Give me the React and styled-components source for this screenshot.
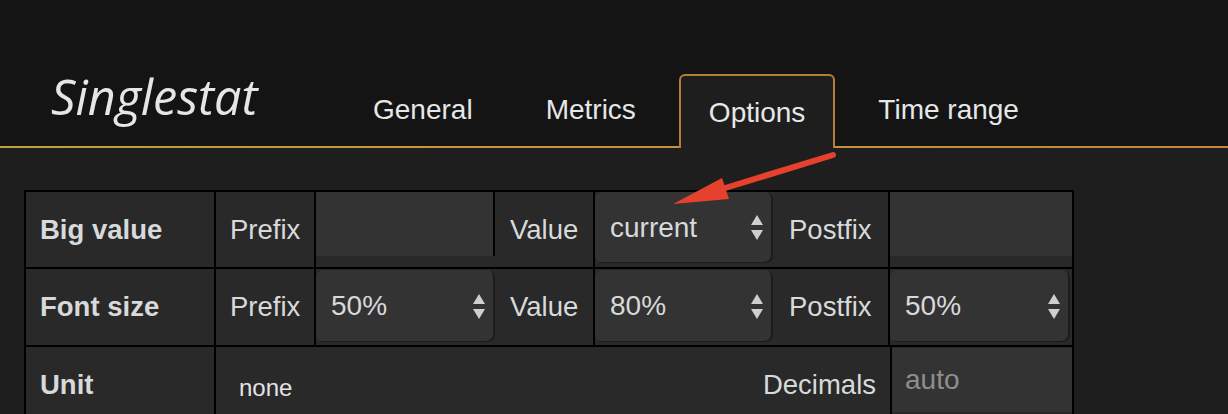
import React from 'react';
import styled, { createGlobalStyle } from 'styled-components';

const GlobalStyle = createGlobalStyle`
  html, body {
    margin: 0;
    padding: 0;
    background: #1f1e1f;
  }

  body {
    font-family: "Liberation Sans", Arial, sans-serif;
    width: 1228px;
    height: 414px;
    overflow: hidden;
  }
`;

const StyledPage = styled.div`
  position: relative;
  width: 1228px;
  height: 414px;
  overflow: hidden;
  background: #1f1e1f;
`;

const StyledHeader = styled.header`
  display: flex;
  align-items: flex-end;
  box-sizing: border-box;
  height: 148px;
  padding-left: 51px;
  background:
    linear-gradient(to right, #c2a03b, #c8863b) left bottom / 100% 2px no-repeat,
    #141414;
`;

const StyledTitle = styled.h1`
  flex: none;
  width: 292px;
  margin: 0 0 28px 0;
  font-family: "Open Sans", "DejaVu Sans", sans-serif;
  font-style: italic;
  font-weight: 400;
  font-size: 48.5px;
  line-height: 48.5px;
  color: #e6e6e6;
`;

const StyledTabs = styled.nav`
  display: flex;
  align-items: flex-end;
  gap: 13px;
`;

const StyledTab = styled.div`
  box-sizing: border-box;
  display: flex;
  align-items: center;
  height: 74px;
  padding: ${props => (props.$active ? '2px 28px 0' : '0 28px 4px')};
  border: 2px solid ${props => (props.$active ? '#b67d3a' : 'transparent')};
  border-bottom: 0;
  border-radius: 6px 6px 0 0;
  background: ${props => (props.$active ? '#1f1e1f' : 'transparent')};
  font-size: 28px;
  color: #e6e7e8;
  white-space: nowrap;
`;

const StyledBody = styled.main`
  padding: 42px 0 0 24px;
`;

const StyledTable = styled.div`
  box-sizing: border-box;
  display: flex;
  flex-direction: column;
  gap: 2px;
  width: 1050px;
  padding: 2px 2px 0 2px;
  background: #000;
`;

const StyledRow = styled.div`
  display: flex;
  height: ${props => props.$h}px;
  background: #292929;
`;

const StyledLabel = styled.div`
  box-sizing: border-box;
  flex: ${props => (props.$grow ? '1 1 auto' : 'none')};
  width: ${props => (props.$w ? `${props.$w}px` : 'auto')};
  display: flex;
  align-items: center;
  justify-content: space-between;
  padding: 0 14px 0 ${props => props.$pl || 14}px;
  border-left: ${props => (props.$sep ? '2px solid #000' : '0')};
  font-size: 27.5px;
  font-weight: ${props => (props.$bold ? 700 : 400)};
  color: #d8d9da;
  white-space: nowrap;
`;

const StyledUnit = styled.span`
  font-size: 24px;
  color: #e4e4e4;
  padding-top: 6px;
`;

const StyledField = styled.div`
  box-sizing: border-box;
  flex: none;
  display: flex;
  align-items: flex-start;
  width: ${props => props.$w}px;
  border-left: 2px solid #000;
`;

const StyledInput = styled.input`
  box-sizing: border-box;
  width: 100%;
  height: 64px;
  margin: ${props => props.$top || 0}px 0 0;
  padding: 0 13px;
  border: 0;
  border-right: ${props => (props.$edge ? '2px solid #000' : '0')};
  outline: none;
  background: #333;
  font-family: "Liberation Sans", Arial, sans-serif;
  font-size: 28px;
  color: #d8d9da;

  &::placeholder {
    color: #8e8e8e;
  }
`;

const StyledSelect = styled.div`
  box-sizing: border-box;
  flex: none;
  align-self: stretch;
  display: flex;
  align-items: center;
  justify-content: space-between;
  width: ${props => props.$w}px;
  margin: ${props => props.$mt}px 0 ${props => props.$mb}px;
  padding: 0 10px 0 15px;
  border-radius: 7px;
  background: #333;
  box-shadow: inset -2px -1px 0 #1c1c1c;
  font-size: 28px;
  color: #d8d9da;
`;

const StyledAnnotation = styled.svg`
  position: absolute;
  left: 0;
  top: 0;
  pointer-events: none;
`;

const SelectArrows = () => (
  <svg width="12" height="25" viewBox="0 0 12 25">
    <polygon points="6,0 12,10 0,10" fill="#cfcfcf" />
    <polygon points="0,15 12,15 6,25" fill="#cfcfcf" />
  </svg>
);

const Select = ({ value, w, mt = 1, mb = 3 }) => (
  <StyledSelect $w={w} $mt={mt} $mb={mb}>
    <span>{value}</span>
    <SelectArrows />
  </StyledSelect>
);

const tabs = ['General', 'Metrics', 'Options', 'Time range'];

const App = () => (
  <StyledPage>
    <GlobalStyle />
    <StyledHeader>
      <StyledTitle>Singlestat</StyledTitle>
      <StyledTabs>
        {tabs.map(tab => (
          <StyledTab key={tab} $active={tab === 'Options'}>{tab}</StyledTab>
        ))}
      </StyledTabs>
    </StyledHeader>

    <StyledBody>
      <StyledTable>
        <StyledRow $h={75}>
          <StyledLabel $w={188} $bold>Big value</StyledLabel>
          <StyledLabel $w={100} $sep>Prefix</StyledLabel>
          <StyledField $w={181}>
            <StyledInput $edge />
          </StyledField>
          <StyledLabel $w={98} $pl={15}>Value</StyledLabel>
          <StyledField $w={180}>
            <Select value="current" w={178} mt={0} mb={4} />
          </StyledField>
          <StyledLabel $w={115} $pl={16}>Postfix</StyledLabel>
          <StyledField $w={184}>
            <StyledInput />
          </StyledField>
        </StyledRow>

        <StyledRow $h={76}>
          <StyledLabel $w={188} $bold>Font size</StyledLabel>
          <StyledLabel $w={100} $sep>Prefix</StyledLabel>
          <StyledField $w={181}>
            <Select value="50%" w={179} />
          </StyledField>
          <StyledLabel $w={98} $pl={15}>Value</StyledLabel>
          <StyledField $w={180}>
            <Select value="80%" w={178} />
          </StyledField>
          <StyledLabel $w={115} $pl={16}>Postfix</StyledLabel>
          <StyledField $w={184}>
            <Select value="50%" w={180} />
          </StyledField>
        </StyledRow>

        <StyledRow $h={76}>
          <StyledLabel $w={188} $bold>Unit</StyledLabel>
          <StyledLabel $grow $sep $pl={23}>
            <StyledUnit>none</StyledUnit>
            <span>Decimals</span>
          </StyledLabel>
          <StyledField $w={182}>
            <StyledInput placeholder="auto" $top={1} />
          </StyledField>
        </StyledRow>
      </StyledTable>
    </StyledBody>

    <StyledAnnotation width="1228" height="414" viewBox="0 0 1228 414">
      <line x1="833" y1="155" x2="722" y2="189" stroke="#e5412d" strokeWidth="6" strokeLinecap="round" />
      <polygon points="673,204 722,178 729,199" fill="#e5412d" />
    </StyledAnnotation>
  </StyledPage>
);

export default App;
